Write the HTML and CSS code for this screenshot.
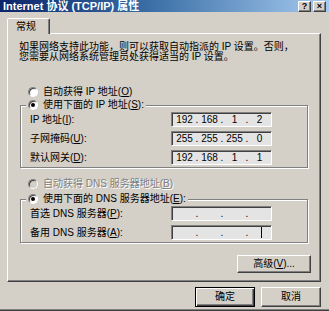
FILE: index.html
```html
<!DOCTYPE html>
<html lang="zh-CN">
<head>
    <meta charset="UTF-8">
    <title>Internet 协议 (TCP/IP) 属性</title>
    <link rel="stylesheet" href="styles.css">
</head>
<body>
    <div class="window">
        <div class="titlebar">
            <span class="title">Internet 协议 (TCP/IP) 属性</span>
            <div class="caption-btns">
                <span class="cap-btn">?</span>
                <span class="cap-btn">×</span>
            </div>
        </div>

        <div class="tabstrip">
            <div class="tab">常规</div>
        </div>

        <div class="panel">
            <p class="intro">如果网络支持此功能，则可以获取自动指派的 IP 设置。否则，<br>您需要从网络系统管理员处获得适当的 IP 设置。</p>

            <div class="radio-row ip-auto"><span class="radio"></span><span>自动获得 IP 地址(<u>O</u>)</span></div>

            <fieldset class="group ip-group">
                <legend><span class="legend-row"><span class="radio checked"></span><span>使用下面的 IP 地址(<u>S</u>):</span></span></legend>
                <div class="field-row">
                    <span class="field-label">IP 地址(<u>I</u>):</span>
                    <div class="ipbox"><span class="oct">192</span><span class="dot">.</span><span class="oct">168</span><span class="dot">.</span><span class="oct">1</span><span class="dot">.</span><span class="oct">2</span></div>
                </div>
                <div class="field-row">
                    <span class="field-label">子网掩码(<u>U</u>):</span>
                    <div class="ipbox"><span class="oct">255</span><span class="dot">.</span><span class="oct">255</span><span class="dot">.</span><span class="oct">255</span><span class="dot">.</span><span class="oct">0</span></div>
                </div>
                <div class="field-row">
                    <span class="field-label">默认网关(<u>D</u>):</span>
                    <div class="ipbox"><span class="oct">192</span><span class="dot">.</span><span class="oct">168</span><span class="dot">.</span><span class="oct">1</span><span class="dot">.</span><span class="oct">1</span></div>
                </div>
            </fieldset>

            <div class="radio-row dns-auto disabled"><span class="radio"></span><span>自动获得 DNS 服务器地址(<u>B</u>)</span></div>

            <fieldset class="group dns-group">
                <legend><span class="legend-row"><span class="radio checked"></span><span>使用下面的 DNS 服务器地址(<u>E</u>):</span></span></legend>
                <div class="field-row">
                    <span class="field-label">首选 DNS 服务器(<u>P</u>):</span>
                    <div class="ipbox"><span class="oct"></span><span class="dot">.</span><span class="oct"></span><span class="dot">.</span><span class="oct"></span><span class="dot">.</span><span class="oct"></span></div>
                </div>
                <div class="field-row">
                    <span class="field-label">备用 DNS 服务器(<u>A</u>):</span>
                    <div class="ipbox"><span class="oct"></span><span class="dot">.</span><span class="oct"></span><span class="dot">.</span><span class="oct"></span><span class="dot">.</span><span class="oct"><span class="caret"></span></span></div>
                </div>
            </fieldset>

            <div class="adv-row">
                <span class="btn adv"><span>高级(<u>V</u>)...</span></span>
            </div>
        </div>

        <div class="dialog-buttons">
            <span class="btn default">确定</span>
            <span class="btn">取消</span>
        </div>
    </div>
</body>
</html>
```

FILE: styles.css
```css
* {
    box-sizing: border-box;
}

body {
    margin: 0;
    font-family: "Liberation Sans", "Noto Sans CJK SC", sans-serif;
    font-size: 10px;
    line-height: 12px;
    color: #000;
    background: #d4d0c8;
}

u {
    text-decoration: underline;
}

.window {
    width: 329px;
    height: 311px;
    background: #d4d0c8;
    border-bottom: 1px solid #404040;
    box-shadow: inset 0 -1px 0 #808080;
    overflow: hidden;
}

/* title bar */
.titlebar {
    height: 12px;
    display: flex;
    align-items: center;
    padding: 0 3px 0 3px;
    background: linear-gradient(to right, #0a246a, #3a6ea5 45%, #a6caf0);
    color: #fff;
    font-weight: bold;
    font-size: 11px;
}

.caption-btns {
    margin-left: auto;
    display: flex;
    gap: 2px;
}

.cap-btn {
    width: 13px;
    height: 11px;
    display: flex;
    align-items: center;
    justify-content: center;
    background: #d4d0c8;
    border: 1px solid;
    border-color: #fff #404040 #404040 #fff;
    box-shadow: inset -1px -1px 0 #808080;
    color: #000;
    font: bold 9px/9px "Liberation Sans", sans-serif;
}

/* tab */
.tabstrip {
    margin-top: 6px;
    padding-left: 7px;
    height: 15px;
    display: flex;
    align-items: flex-end;
}

.tab {
    position: relative;
    z-index: 1;
    width: 43px;
    height: 16px;
    margin-bottom: -1px;
    padding: 2px 0 0 8px;
    background: #d4d0c8;
    border-top: 1px solid #fff;
    border-left: 1px solid #fff;
    border-right: 1px solid #404040;
    border-radius: 2px 2px 0 0;
    box-shadow: inset -1px 0 0 #808080;
}

.panel {
    margin-left: 7px;
    width: 314px;
    height: 249px;
    padding: 8px 0 0 11px;
    border: 1px solid;
    border-color: #fff #404040 #404040 #fff;
    box-shadow: inset -1px -1px 0 #808080;
}

.intro {
    margin: 0;
    line-height: 10px;
}

/* radios */
.radio-row,
.legend-row {
    display: flex;
    align-items: center;
    gap: 5px;
    height: 12px;
    white-space: nowrap;
}

.radio-row {
    margin-left: 9px;
}

.ip-auto {
    margin-top: 24px;
}

.dns-auto {
    margin-top: 10px;
}

.radio {
    flex: none;
    width: 10px;
    height: 10px;
    display: flex;
    align-items: center;
    justify-content: center;
    border-radius: 50%;
    background: #fff;
    border: 1px solid;
    border-color: #808080 #fff #fff #808080;
    box-shadow: inset 1px 1px 0 #404040;
}

.radio.checked::after {
    content: "";
    width: 4px;
    height: 4px;
    border-radius: 50%;
    background: #000;
}

.disabled {
    color: #808080;
    text-shadow: 1px 1px 0 #fff;
}

.disabled .radio {
    background: #d4d0c8;
}

/* group boxes */
.group {
    margin: 1px 0 0 1px;
    width: 288px;
    padding: 1px 0 2px 0;
    min-width: 0;
    border: 1px solid #808080;
    box-shadow: 1px 1px 0 #fff, inset 1px 1px 0 #fff;
}

.dns-group {
    margin-top: 3px;
}

.group legend {
    margin-left: 5px;
    padding: 0 2px;
    background: #d4d0c8;
}

.field-row {
    display: flex;
    align-items: center;
    height: 15px;
    margin-left: 9px;
}

.field-row + .field-row {
    margin-top: 4px;
}

.field-label {
    width: 141px;
    white-space: nowrap;
}

.ipbox {
    width: 101px;
    height: 15px;
    display: flex;
    align-items: center;
    padding-left: 2px;
    background: #e4e4e4;
    border: 1px solid;
    border-color: #808080 #fff #fff #808080;
    box-shadow: inset 1px 1px 0 #404040;
    font-family: "Liberation Sans", sans-serif;
}

.oct {
    width: 21px;
    display: flex;
    justify-content: center;
}

.dot {
    width: 4px;
    text-align: center;
}

.caret {
    display: block;
    width: 1px;
    height: 11px;
    margin-left: 4px;
    background: #000;
}

/* buttons */
.btn {
    width: 60px;
    height: 20px;
    display: flex;
    align-items: center;
    justify-content: center;
    background: #d4d0c8;
    border: 1px solid;
    border-color: #fff #404040 #404040 #fff;
    box-shadow: inset -1px -1px 0 #808080;
    white-space: nowrap;
}

.btn.default {
    border-color: #000;
    box-shadow: inset 1px 1px 0 #fff, inset -1px -1px 0 #404040, inset -2px -2px 0 #808080;
}

.adv-row {
    width: 292px;
    margin-top: 12px;
    display: flex;
    justify-content: flex-end;
}

.btn.adv {
    width: 74px;
    height: 18px;
}

.dialog-buttons {
    width: 321px;
    margin-top: 5px;
    display: flex;
    justify-content: flex-end;
    gap: 6px;
}
```
